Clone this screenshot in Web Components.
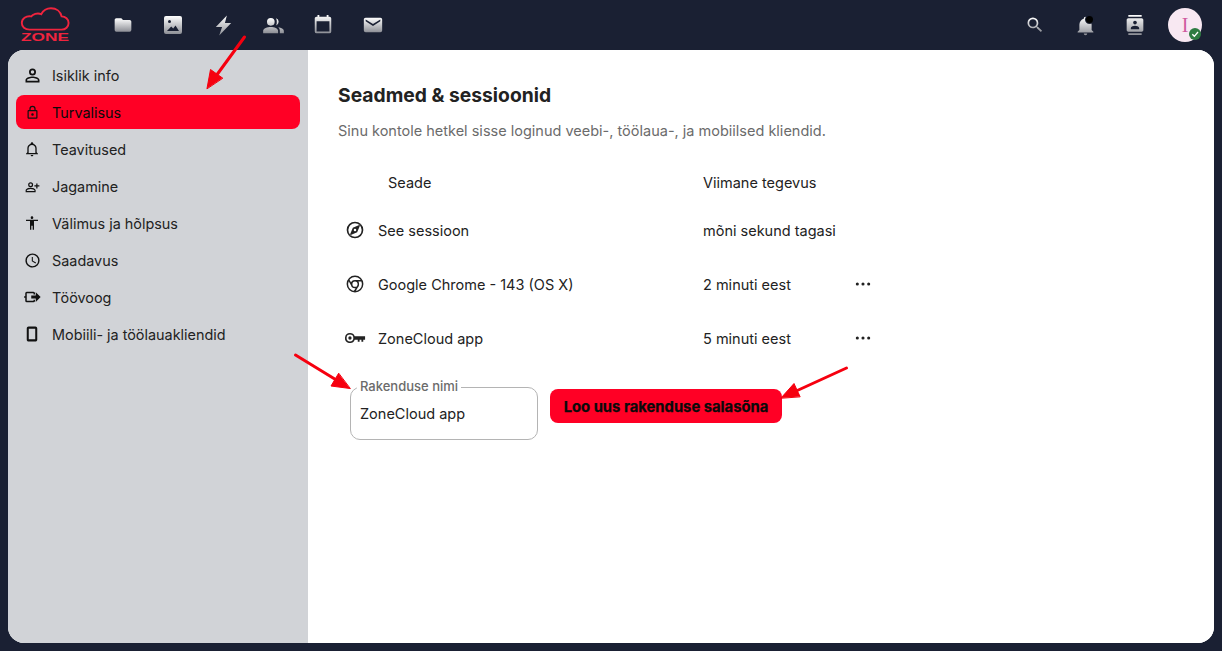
<!DOCTYPE html>
<html lang="et"><head><meta charset="utf-8"><title>Seadmed & sessioonid</title>
<style>
html,body{margin:0;height:100%;background:#1a2033;overflow:hidden}
body{font-family:Inter,"Liberation Sans",sans-serif;color:#222}
</style></head><body>
<z-app>
  <z-header slot="header"></z-header>
  <z-sidebar slot="side">
    <z-nav icon="account" size="21" label="Isiklik info"></z-nav>
    <z-nav icon="lock" size="15" label="Turvalisus" active></z-nav>
    <z-nav icon="bell" size="16" label="Teavitused"></z-nav>
    <z-nav icon="share" size="15" label="Jagamine"></z-nav>
    <z-nav icon="human" size="16" label="Välimus ja hõlpsus"></z-nav>
    <z-nav icon="clock" size="17" label="Saadavus"></z-nav>
    <z-nav icon="flow" size="18" label="Töövoog"></z-nav>
    <z-nav icon="phone" size="18" label="Mobiili- ja töölauakliendid"></z-nav>
  </z-sidebar>
  <z-sessions slot="main"></z-sessions>
</z-app>
<z-arrows></z-arrows>
<script>
const P={
account:'M12,4A4,4 0 0,1 16,8A4,4 0 0,1 12,12A4,4 0 0,1 8,8A4,4 0 0,1 12,4M12,6A2,2 0 0,0 10,8A2,2 0 0,0 12,10A2,2 0 0,0 14,8A2,2 0 0,0 12,6M12,13C14.67,13 20,14.33 20,17V20H4V17C4,14.33 9.33,13 12,13M12,14.9C9.03,14.9 5.9,16.36 5.9,17V18.1H18.1V17C18.1,16.36 14.97,14.9 12,14.9Z',
lock:'M12,17C10.89,17 10,16.1 10,15C10,13.89 10.89,13 12,13A2,2 0 0,1 14,15A2,2 0 0,1 12,17M18,20V10H6V20H18M18,8A2,2 0 0,1 20,10V20A2,2 0 0,1 18,22H6C4.89,22 4,21.1 4,20V10C4,8.89 4.89,8 6,8H7V6A5,5 0 0,1 12,1A5,5 0 0,1 17,6V8H18M12,3A3,3 0 0,0 9,6V8H15V6A3,3 0 0,0 12,3Z',
bell:'M10 21H14C14 22.1 13.1 23 12 23S10 22.1 10 21M21 19V20H3V19L5 17V11C5 7.9 7 5.2 10 4.3V4C10 2.9 10.9 2 12 2S14 2.9 14 4V4.3C17 5.2 19 7.9 19 11V17L21 19M17 11C17 8.2 14.8 6 12 6S7 8.2 7 11V18H17V11Z',
share:'M9,5A4,4 0 0,1 13,9A4,4 0 0,1 9,13A4,4 0 0,1 5,9A4,4 0 0,1 9,5M9,7A2,2 0 0,0 7,9A2,2 0 0,0 9,11A2,2 0 0,0 11,9A2,2 0 0,0 9,7M9,14C11.67,14 17,15.33 17,18V21H1V18C1,15.33 6.33,14 9,14M9,15.9C6.03,15.9 2.9,17.36 2.9,18V19.1H15.1V18C15.1,17.36 11.97,15.9 9,15.9M18,7V10H15V12H18V15H20V12H23V10H20V7H18Z',
human:'M21 9H15V22H13V16H11V22H9V9H3V7H21M12 2A2 2 0 0 1 14 4A2 2 0 0 1 12 6C10.9 6 10 5.1 10 4A2 2 0 0 1 12 2Z',
clock:'M12,20A8,8 0 0,0 20,12A8,8 0 0,0 12,4A8,8 0 0,0 4,12A8,8 0 0,0 12,20M12,2A10,10 0 0,1 22,12A10,10 0 0,1 12,22C6.47,22 2,17.5 2,12A10,10 0 0,1 12,2M12.5,7V12.25L17,14.92L16.25,16.18L11,13V7H12.5Z',
flow:'M5 5H14A2 2 0 0 1 16 7V8.5H14V7H5V17H14V15.5H16V17A2 2 0 0 1 14 19H5A2 2 0 0 1 3 17V13H1.5V11H3V7A2 2 0 0 1 5 5M17 5.5L23.5 12L17 18.5V14H11V10H17Z',
phone:'M16.3,19H7.7V5H16.3M16.5,2H7.5C6.1,2 5,3.1 5,4.5V19.5C5,20.9 6.1,22 7.5,22H16.5C17.9,22 19,20.9 19,19.5V4.5C19,3.1 17.9,2 16.5,2Z',
folder:'M10,4H4C2.89,4 2,4.89 2,6V18A2,2 0 0,0 4,20H20A2,2 0 0,0 22,18V8C22,6.89 21.1,6 20,6H12L10,4Z',
image:'M5,3H19A2,2 0 0,1 21,5V19A2,2 0 0,1 19,21H5A2,2 0 0,1 3,19V5A2,2 0 0,1 5,3M8.5,7A1.5,1.5 0 0,0 7,8.5A1.5,1.5 0 0,0 8.5,10A1.5,1.5 0 0,0 10,8.5A1.5,1.5 0 0,0 8.5,7M6,18H18L14.5,12.5L12.2,15.6L10.2,13.4L6,18Z',
flash:'M15.5 1.5L4 13.5H10.5L7.5 22.5L20 9.5H13.5L15.5 1.5Z',
people:'M9.2 4.2A4 4 0 0 1 13.2 8.2A4 4 0 0 1 9.2 12.2A4 4 0 0 1 5.2 8.2A4 4 0 0 1 9.2 4.2M9.2 13.6C12.8 13.6 16.8 15.2 16.8 17.6V20H1.2V17.6C1.2 15.2 5.6 13.6 9.2 13.6M14.6 4.4A4 4 0 0 1 17.4 8.2A4 4 0 0 1 14.6 12A6 6 0 0 0 15.4 8.2A6 6 0 0 0 14.6 4.4M17 13.9C20 14.5 22.8 15.8 22.8 17.6V20H18.6V17.6C18.6 16 18 14.9 17 13.9Z',
calendar:'M19,3H18V1H16V3H8V1H6V3H5C3.89,3 3,3.9 3,5V19A2,2 0 0,0 5,21H19A2,2 0 0,0 21,19V5A2,2 0 0,0 19,3M19,19H5V8H19V19Z',
mail:'M20,4H4C2.89,4 2,4.89 2,6V18A2,2 0 0,0 4,20H20A2,2 0 0,0 22,18V6C22,4.89 21.1,4 20,4M20,8L12,13L4,8V6L12,11L20,6V8Z',
search:'M9.5,3A6.5,6.5 0 0,1 16,9.5C16,11.11 15.41,12.59 14.44,13.73L14.71,14H15.5L20.5,19L19,20.5L14,15.5V14.71L13.73,14.44C12.59,15.41 11.11,16 9.5,16A6.5,6.5 0 0,1 3,9.5A6.5,6.5 0 0,1 9.5,3M9.5,5C7,5 5,7 5,9.5C5,12 7,14 9.5,14C12,14 14,12 14,9.5C14,7 12,5 9.5,5Z',
bellfill:'M21,19V20H3V19L5,17V11C5,7.9 7.03,5.17 10,4.29C10,4.19 10,4.1 10,4A2,2 0 0,1 12,2A2,2 0 0,1 14,4C14,4.1 14,4.19 14,4.29C16.97,5.17 19,7.9 19,11V17L21,19M14,21A2,2 0 0,1 12,23A2,2 0 0,1 10,21',
contacts:'M20,0H4V2H20V0M4,24H20V22H4V24M20,4H4C2.9,4 2,4.9 2,6V18C2,19.1 2.9,20 4,20H20C21.1,20 22,19.1 22,18V6C22,4.9 21.1,4 20,4M12,6.75C13.24,6.75 14.25,7.76 14.25,9C14.25,10.24 13.24,11.25 12,11.25C10.76,11.25 9.75,10.24 9.75,9C9.75,7.76 10.76,6.75 12,6.75M17,17H7V15.5C7,13.83 10.33,13 12,13C13.67,13 17,13.83 17,15.5V17Z',
compass:'M12 2A10 10 0 1 1 12 22A10 10 0 1 1 12 2M12 4A8 8 0 1 0 12 20A8 8 0 1 0 12 4M18.5 5.5L14.6 14.6L5.5 18.5L9.4 9.4L18.5 5.5M12 10.5A1.5 1.5 0 1 0 12 13.5A1.5 1.5 0 1 0 12 10.5Z',
chrome:'S M12 2.8A9.2 9.2 0 1 1 12 21.2A9.2 9.2 0 1 1 12 2.8M12 8.2A4 4 0 1 0 12 16.2A4 4 0 1 0 12 8.2M12 8.2H20M8.6 14.2L4.6 7.2M15.5 14.2L11.4 21',
key:'M6.5 6.5A5.5 5.5 0 0 1 11.7 10H23V14H21V16H19V14H17V16H15V14H11.7A5.5 5.5 0 1 1 6.5 6.5M6.5 8.3A3.7 3.7 0 1 0 6.5 15.7A3.7 3.7 0 1 0 6.5 8.3M6.5 10.2A1.8 1.8 0 1 1 6.5 13.8A1.8 1.8 0 1 1 6.5 10.2Z',
dots:'M16.5,12A1.7,1.7 0 1,1 19.9,12A1.7,1.7 0 1,1 16.5,12M10.3,12A1.7,1.7 0 1,1 13.7,12A1.7,1.7 0 1,1 10.3,12M4.1,12A1.7,1.7 0 1,1 7.5,12A1.7,1.7 0 1,1 4.1,12Z'
};
function def(n,html,init){customElements.define(n,class extends HTMLElement{
  connectedCallback(){if(this.shadowRoot)return;const s=this.attachShadow({mode:'open'});s.innerHTML=typeof html==='function'?html(this):html;init&&init(this,s)}
})}
def('z-icon',h=>{const sz=h.getAttribute('size')||20,n=h.getAttribute('name'),g=h.hasAttribute('grad'),d=P[n],st=d.startsWith('S ');
 return `<style>:host{display:inline-flex;width:${sz}px;height:${sz}px;flex:none}svg{display:block;width:100%;height:100%}</style>
 <svg viewBox="0 0 24 24" aria-hidden="true">${g?'<defs><linearGradient id="g" x1="0" y1="0" x2="0" y2="1"><stop offset="0" stop-color="#fff"/><stop offset="1" stop-color="#8d8f96"/></linearGradient></defs>':''}${st?`<path fill="none" stroke="currentColor" stroke-width="1.8" d="${d.slice(2)}"/>`:`<path fill="${g?'url(#g)':'currentColor'}" fill-rule="evenodd" d="${d}"/>`}</svg>`});
def('z-app',`<style>
:host{display:flex;flex-direction:column;height:651px;box-sizing:border-box;padding:0 8px 8px}
.body{flex:1;display:flex;min-height:0;border-radius:16px;overflow:hidden;background:#fff}
</style><slot name="header"></slot><div class="body"><slot name="side"></slot><slot name="main"></slot></div>`);
def('z-header',`<style>
:host{display:flex;height:50px;margin:0 -8px;color:#fff;align-items:center}
.logo{width:98px;height:50px;flex:none}
.logo svg{display:block;width:98px;height:50px}
.btn{width:50px;height:50px;display:flex;align-items:center;justify-content:center;flex:none;position:relative}
.sp{flex:1}.dot{position:absolute;left:26px;top:16px;width:7px;height:7px;border-radius:50%;background:#000;box-shadow:0 0 0 1px #1a2033}
.end{width:12px}
.av{width:34px;height:34px;border-radius:50%;background:#f8e8f2;color:#cf5a9f;font:20px "Liberation Serif",serif;display:flex;align-items:center;justify-content:center;position:relative}
.st{position:absolute;left:21px;top:20px;width:12px;height:12px;border-radius:50%;background:#2d7b41;display:flex;align-items:center;justify-content:center}
.st svg{width:8px;height:8px}
</style>
<div class="logo"><svg viewBox="0 0 98 50"><path fill="none" stroke="#f0243e" stroke-width="1.9" d="M29.5 29.6H61.5C65.6 29.6 68.6 26.7 68.6 23C68.6 19.2 65.4 16.4 61.6 16.4C60.6 11.3 56.2 8.2 51 8.2C46.8 8.2 43.2 10.4 41.2 14.2C37.2 12.3 32.6 14.6 31.2 16.4C26 15.6 21.8 18.6 21.8 23C21.8 26.8 25 29.6 29.5 29.6Z"/><text x="21" y="41.2" font-family="Liberation Sans" font-weight="700" font-size="11.5" fill="#f0243e" textLength="48" lengthAdjust="spacingAndGlyphs">ZONE</text></svg></div>
<div class="btn"><z-icon name="folder" size="20" grad></z-icon></div>
<div class="btn"><z-icon name="image" size="24" grad></z-icon></div>
<div class="btn"><z-icon name="flash" size="23" grad></z-icon></div>
<div class="btn"><z-icon name="people" size="23" grad></z-icon></div>
<div class="btn"><z-icon name="calendar" size="22" grad></z-icon></div>
<div class="btn"><z-icon name="mail" size="22" grad></z-icon></div>
<div class="sp"></div>
<div class="btn"><z-icon name="search" size="20" grad></z-icon></div>
<div class="btn"><z-icon name="bellfill" size="21" grad></z-icon><span class="dot"></span></div>
<div class="btn"><z-icon name="contacts" size="20" grad></z-icon></div>
<div class="btn"><div class="av">I<span class="st"><svg viewBox="0 0 24 24"><path fill="none" stroke="#fff" stroke-width="4" d="M4 13L10 19L21 6"/></svg></span></div></div>
<div class="end"></div>`);
def('z-sidebar',`<style>:host{display:flex;flex-direction:column;gap:3px;width:300px;flex:none;box-sizing:border-box;padding:8px;background:#d1d3d7}</style><slot></slot>`);
def('z-nav',h=>`<style>
:host{display:flex;align-items:center;height:34px;border-radius:8px;font-size:14.4px;color:#222}
:host([active]){background:#ff0025;color:#0a0a0a}
.i{width:32px;display:flex;justify-content:center;margin-right:4px;color:#111}
span{white-space:nowrap}
</style><div class="i"><z-icon name="${h.getAttribute('icon')}" size="${h.getAttribute('size')}"></z-icon></div><span>${h.getAttribute('label')}</span>`);
def('z-row',h=>`<style>
:host{display:grid;grid-template-columns:40px 325px 145px 30px;align-items:center;height:54px;font-size:14.5px;color:#222}
.ic{width:34px;display:flex;justify-content:center;color:#222}
.d{display:flex;justify-content:center;color:#222}
</style><div class="ic"><z-icon name="${h.getAttribute('icon')}" size="${h.getAttribute('isize')||20}"></z-icon></div><div>${h.getAttribute('name')}</div><div>${h.getAttribute('time')}</div>${h.hasAttribute('menu')?'<div class="d"><z-icon name="dots" size="22"></z-icon></div>':'<div></div>'}`);
def('z-field',`<style>
:host{display:block;width:188px;flex:none}
fieldset{margin:0;padding:0 9px;height:62px;box-sizing:border-box;border:1px solid #b4b4b4;border-radius:10px;display:block;min-width:0}
legend{padding:0 3px 2px;margin-left:-3px;font-size:13px;line-height:17px;font-weight:500;color:#6b6b6b}
div{font-size:14.5px;line-height:20px;margin-top:7px;color:#222}
</style><fieldset><legend>Rakenduse nimi</legend><div>ZoneCloud app</div></fieldset>`);
def('z-sessions',`<style>
:host{display:block;flex:1;box-sizing:border-box;padding:30px;background:#fff;min-width:0}
h2{margin:0;font-size:19.3px;line-height:30px;font-weight:700;color:#222}
p{margin:11px 0 0;font-size:14.5px;line-height:20px;color:#6b6b6b}
.head{display:grid;grid-template-columns:50px 315px 1fr;height:38px;padding-bottom:2px;align-items:center;margin-top:22px;font-size:14.5px;color:#222}
.form{display:flex;gap:12px;align-items:flex-start;margin:13px 0 0 12px}
button{margin-top:11px;height:34px;width:232px;padding:2px 0 0;box-sizing:border-box;border:0;border-radius:8px;background:#ff0025;color:#0a0a0a;font:700 14.8px Inter,"Liberation Sans",sans-serif;-webkit-text-stroke:.25px #0a0a0a}
</style>
<h2>Seadmed &amp; sessioonid</h2>
<p>Sinu kontole hetkel sisse loginud veebi-, töölaua-, ja mobiilsed kliendid.</p>
<div class="head"><span></span><span>Seade</span><span>Viimane tegevus</span></div>
<z-row icon="compass" name="See sessioon" time="mõni sekund tagasi"></z-row>
<z-row icon="chrome" name="Google Chrome - 143 (OS X)" time="2 minuti eest" menu></z-row>
<z-row icon="key" isize="22" name="ZoneCloud app" time="5 minuti eest" menu></z-row>
<div class="form"><z-field></z-field><button>Loo uus rakenduse salasõna</button></div>`);
def('z-arrows',`<style>:host{position:absolute;left:0;top:0;width:1222px;height:651px;pointer-events:none}svg{display:block}</style>
<svg width="1222" height="651" viewBox="0 0 1222 651"><g fill="#f6000f" stroke="#f6000f" stroke-linecap="round" stroke-linejoin="round">
<path fill="none" stroke-width="3" d="M244.5 37L216 76"/><path stroke-width="1" d="M207 88.5L210.5 69.5L222.5 78Z"/>
<path fill="none" stroke-width="3" d="M295.5 355L338 381"/><path stroke-width="1" d="M350 388.5L331 386L338.5 373.5Z"/>
<path fill="none" stroke-width="3" d="M846.5 368L794 392"/><path stroke-width="1" d="M781 398L794 383.5L800 396.5Z"/>
</g></svg>`);
</script>
</body></html>
